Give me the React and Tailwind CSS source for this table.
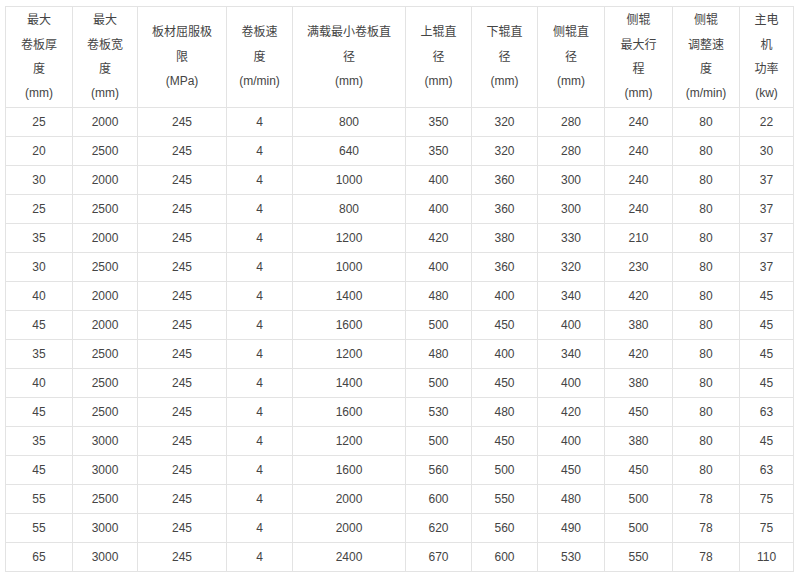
const widths = [67, 65, 89, 66, 113, 66, 66, 67, 68, 67, 54];

const headers = [
  ['最大', '卷板厚', '度', '(mm)'],
  ['最大', '卷板宽', '度', '(mm)'],
  ['板材屈服极', '限', '(MPa)'],
  ['卷板速', '度', '(m/min)'],
  ['满载最小卷板直', '径', '(mm)'],
  ['上辊直', '径', '(mm)'],
  ['下辊直', '径', '(mm)'],
  ['侧辊直', '径', '(mm)'],
  ['侧辊', '最大行', '程', '(mm)'],
  ['侧辊', '调整速', '度', '(m/min)'],
  ['主电', '机', '功率', '(kw)'],
];

const rows = [
  [25, 2000, 245, 4, 800, 350, 320, 280, 240, 80, 22],
  [20, 2500, 245, 4, 640, 350, 320, 280, 240, 80, 30],
  [30, 2000, 245, 4, 1000, 400, 360, 300, 240, 80, 37],
  [25, 2500, 245, 4, 800, 400, 360, 300, 240, 80, 37],
  [35, 2000, 245, 4, 1200, 420, 380, 330, 210, 80, 37],
  [30, 2500, 245, 4, 1000, 400, 360, 320, 230, 80, 37],
  [40, 2000, 245, 4, 1400, 480, 400, 340, 420, 80, 45],
  [45, 2000, 245, 4, 1600, 500, 450, 400, 380, 80, 45],
  [35, 2500, 245, 4, 1200, 480, 400, 340, 420, 80, 45],
  [40, 2500, 245, 4, 1400, 500, 450, 400, 380, 80, 45],
  [45, 2500, 245, 4, 1600, 530, 480, 420, 450, 80, 63],
  [35, 3000, 245, 4, 1200, 500, 450, 400, 380, 80, 45],
  [45, 3000, 245, 4, 1600, 560, 500, 450, 450, 80, 63],
  [55, 2500, 245, 4, 2000, 600, 550, 480, 500, 78, 75],
  [55, 3000, 245, 4, 2000, 620, 560, 490, 500, 78, 75],
  [65, 3000, 245, 4, 2400, 670, 600, 530, 550, 78, 110],
];

export default function App() {
  return (
    <div className="min-h-[581px] bg-white pl-[5px] pt-[6px] font-['Liberation_Sans','Noto_Sans_CJK_SC',sans-serif] text-[12px] text-[#444]">
      <table className="table-fixed border-collapse">
        <colgroup>
          {widths.map((w, i) => (
            <col key={i} style={{ width: w }} />
          ))}
        </colgroup>
        <thead>
          <tr className="h-[101px]">
            {headers.map((lines, i) => (
              <th key={i} className="border border-[#e3e3e3] p-0 align-middle font-normal leading-[24.4px]">
                {lines.map((l, j) => (
                  <div key={j}>{l}</div>
                ))}
              </th>
            ))}
          </tr>
        </thead>
        <tbody>
          {rows.map((r, i) => (
            <tr key={i} className="h-[29px]">
              {r.map((v, j) => (
                <td key={j} className="border border-[#e3e3e3] p-0 text-center align-middle leading-[28px]">
                  {v}
                </td>
              ))}
            </tr>
          ))}
        </tbody>
      </table>
    </div>
  );
}
